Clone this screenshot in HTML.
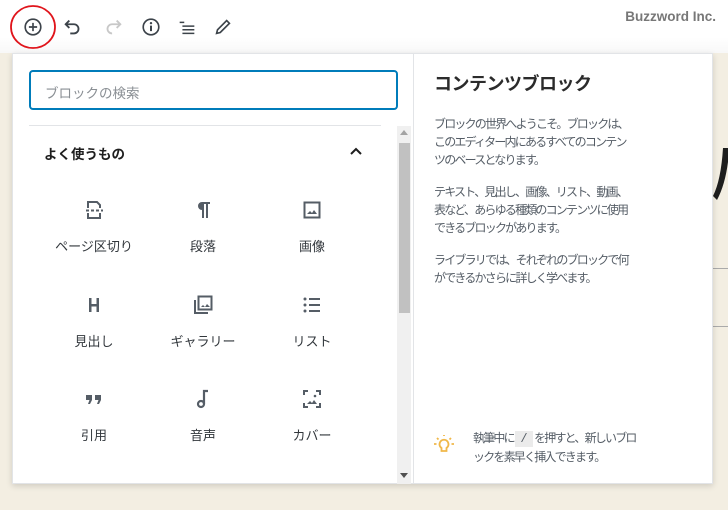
<!DOCTYPE html>
<html><head><meta charset="utf-8"><style>
*{margin:0;padding:0;box-sizing:border-box}
body{width:728px;height:510px;overflow:hidden;background:#f3eee2;font-family:"Liberation Sans","Noto Sans CJK JP",sans-serif;position:relative;color:#1e1e1e}
.top{position:absolute;left:0;top:0;width:728px;height:53px;background:linear-gradient(#fff,#fff 70%,#f8f8f8)}
.brand{position:absolute;right:12px;top:9px;color:#777;font-weight:bold;font-size:13.5px}
.ic{position:absolute;top:14px}
.panel{position:absolute;left:12px;top:53px;width:701px;height:431px;background:#fff;box-shadow:0 2px 6px rgba(0,0,0,.15);border:1px solid #e2e4e7}
.right{position:absolute;left:400px;top:0;width:300px;height:429px;border-left:1px solid #e2e4e7;padding:16px 20px}
.right h2{font-size:18px;font-weight:bold;color:#2b2b2b;margin-bottom:19px;margin-top:0;letter-spacing:-0.5px}
.right p{font-size:12px;letter-spacing:-1.8px;line-height:18px;color:#555d66;margin-bottom:14px;width:196px}
.search{position:absolute;left:16px;top:16px;width:369px;height:40px;border:2px solid #007cba;border-radius:4px;font-size:13.5px;color:#8a8f94;padding:10px 14px}
.hr{position:absolute;left:16px;top:71px;width:352px;height:1px;background:#e2e4e7}
.sb{position:absolute;left:384px;top:72px;width:14px;height:358px;background:#f0f0f0}
.thumb{position:absolute;left:2px;top:17px;width:11px;height:170px;background:#c1c1c1}
.fav{position:absolute;left:31px;top:89px;font-size:13.5px;font-weight:bold}
.item{position:absolute;width:100px;text-align:center;font-size:13px;color:#32373c}
.item svg{display:block;margin:0 auto 14px}
.tip{position:absolute;left:473px;top:429px;font-size:12px;letter-spacing:-1.8px;line-height:18px;color:#555d66;width:166px}
code{background:#ebebeb;padding:1px 5px;font-family:"Liberation Mono",monospace;letter-spacing:0}
</style></head><body>
<div class="top">
<svg class="ic" style="left:9px;top:4px" width="48" height="46"><ellipse cx="24" cy="23" rx="22" ry="21" fill="none" stroke="#e0141b" stroke-width="1.8"/></svg>
<svg class="ic" style="left:22px;top:16px" width="22" height="22" viewBox="0 0 24 24"><circle cx="12" cy="12" r="8.5" fill="none" stroke="#3c434a" stroke-width="1.8"/><path d="M12 7.5v9M7.5 12h9" stroke="#3c434a" stroke-width="1.8"/></svg>
<svg class="ic" style="left:62px;top:16px" width="22" height="22" viewBox="0 0 24 24"><path d="M8 5L4 9l4 4" fill="none" stroke="#3c434a" stroke-width="2"/><path d="M4 9h9a5 5 0 010 10H9" fill="none" stroke="#3c434a" stroke-width="2"/></svg>
<svg class="ic" style="left:102px;top:16px" width="22" height="22" viewBox="0 0 24 24"><path d="M16 5l4 4-4 4" fill="none" stroke="#c8c8c8" stroke-width="2"/><path d="M20 9h-9a5 5 0 000 10h0" fill="none" stroke="#c8c8c8" stroke-width="2"/></svg>
<svg class="ic" style="left:140px;top:16px" width="22" height="22" viewBox="0 0 24 24"><circle cx="12" cy="12" r="8.5" fill="none" stroke="#3c434a" stroke-width="1.8"/><path d="M12 10.5v6" stroke="#3c434a" stroke-width="2.2"/><circle cx="12" cy="7.8" r="1.3" fill="#3c434a"/></svg>
<svg class="ic" style="left:176px;top:16px" width="22" height="22" viewBox="0 0 24 24"><path d="M4 7h5M7 11h13M7 15h13M7 19h13" stroke="#3c434a" stroke-width="1.6"/></svg>
<svg class="ic" style="left:212px;top:16px" width="22" height="22" viewBox="0 0 24 24"><path d="M5 19l1-4L16 5l3 3L9 18z" fill="none" stroke="#3c434a" stroke-width="1.8"/></svg>
<div class="brand">Buzzword Inc.</div>
</div>
<svg style="position:absolute;left:713px;top:140px" width="15" height="70"><path d="M15 8v14Q12 45 4 60L0 56Q8 40 10 8z" fill="#1e1e1e"/></svg>
<div style="position:absolute;left:713px;top:268px;width:15px;height:1px;background:#aaa"></div>
<div style="position:absolute;left:713px;top:326px;width:15px;height:1px;background:#aaa"></div>
<div class="panel">
<div class="search">ブロックの検索</div>
<div class="hr"></div>
<div class="fav">よく使うもの</div>
<svg style="position:absolute;left:336px;top:90px" width="14" height="14" viewBox="0 0 14 14"><path d="M2 10l5-5 5 5" fill="none" stroke="#1e1e1e" stroke-width="2"/></svg>
<div class="sb"><div class="thumb"></div>
<svg style="position:absolute;left:3px;top:4px" width="8" height="5"><path d="M0 5L4 0 8 5z" fill="#a3a3a3"/></svg>
<svg style="position:absolute;left:3px;top:347px" width="8" height="5"><path d="M0 0L4 5 8 0z" fill="#505050"/></svg></div>

<div class="item" style="left:31px;top:144px"><svg width="24" height="24" viewBox="0 0 24 24" fill="none" stroke="#555d66" stroke-width="2"><path d="M6 10V4h9l3 3v3M6 15v5h12v-5M4 12.5h3M9 12.5h3M14 12.5h3M19 12.5h2"/></svg>ページ区切り</div>
<div class="item" style="left:140px;top:144px"><svg width="24" height="24" viewBox="0 0 24 24"><path d="M11 4h8v2h-2v14h-2V6h-2v14h-2v-8a4 4 0 010-8z" fill="#555d66"/></svg>段落</div>
<div class="item" style="left:249px;top:144px"><svg width="24" height="24" viewBox="0 0 24 24"><rect x="4.5" y="4.5" width="15" height="15" fill="none" stroke="#555d66" stroke-width="2"/><path d="M7 16l3-3 2 2 2-3 3 4z" fill="#555d66"/></svg>画像</div>
<div class="item" style="left:31px;top:239px"><svg width="24" height="24" viewBox="0 0 24 24"><path d="M7 5h2.5v6h5V5H17v14h-2.5v-5.5h-5V19H7z" fill="#555d66"/></svg>見出し</div>
<div class="item" style="left:140px;top:239px"><svg width="24" height="24" viewBox="0 0 24 24" fill="none" stroke="#555d66" stroke-width="2"><rect x="7.5" y="3.5" width="13" height="13"/><path d="M4 7v13h13"/><path d="M10 14l2-2 2 2 2-3 3 3z" fill="#555d66" stroke="none"/></svg>ギャラリー</div>
<div class="item" style="left:249px;top:239px"><svg width="24" height="24" viewBox="0 0 24 24" fill="#555d66"><circle cx="5" cy="6" r="1.5"/><circle cx="5" cy="12" r="1.5"/><circle cx="5" cy="18" r="1.5"/><path d="M9 5h11v2H9zM9 11h11v2H9zM9 17h11v2H9z"/></svg>リスト</div>
<div class="item" style="left:31px;top:333px"><svg width="24" height="24" viewBox="0 0 24 24" fill="#555d66"><path d="M4 8h6v5l-2 4H6l1.5-4H4zM13 8h6v5l-2 4h-2l1.5-4H13z"/></svg>引用</div>
<div class="item" style="left:140px;top:333px"><svg width="24" height="24" viewBox="0 0 24 24" fill="none" stroke="#555d66" stroke-width="2.2"><circle cx="10" cy="17" r="3"/><path d="M13 17V4h4"/></svg>音声</div>
<div class="item" style="left:249px;top:333px"><svg width="24" height="24" viewBox="0 0 24 24" fill="none" stroke="#555d66" stroke-width="2"><path d="M4 8V4h4M16 4h4v4M20 16v4h-4M8 20H4v-4"/><path d="M7 17l3-3 2 2 2-3 3 4z" fill="#555d66" stroke="none"/><circle cx="15" cy="9" r="1.3" fill="#555d66" stroke="none"/></svg>カバー</div>

<div class="right">
<h2>コンテンツブロック</h2>
<p>ブロックの世界へようこそ。ブロックは、このエディター内にあるすべてのコンテンツのベースとなります。</p>
<p>テキスト、見出し、画像、リスト、動画、表など、あらゆる種類のコンテンツに使用できるブロックがあります。</p>
<p>ライブラリでは、それぞれのブロックで何ができるかさらに詳しく学べます。</p>
</div>
</div>
<svg style="position:absolute;left:432px;top:433px" width="24" height="24" viewBox="0 0 24 24" fill="none" stroke="#f0b849" stroke-width="1.8"><path d="M9.5 15a4.5 4.5 0 115 0v3h-5z"/><path d="M2 11h2.5M19.5 11H22M5 5l1.5 1.5M19 5l-1.5 1.5M12 2v1"/></svg>
<div class="tip">執筆中に <code>/</code> を押すと、新しいブロックを素早く挿入できます。</div>
</body></html>
